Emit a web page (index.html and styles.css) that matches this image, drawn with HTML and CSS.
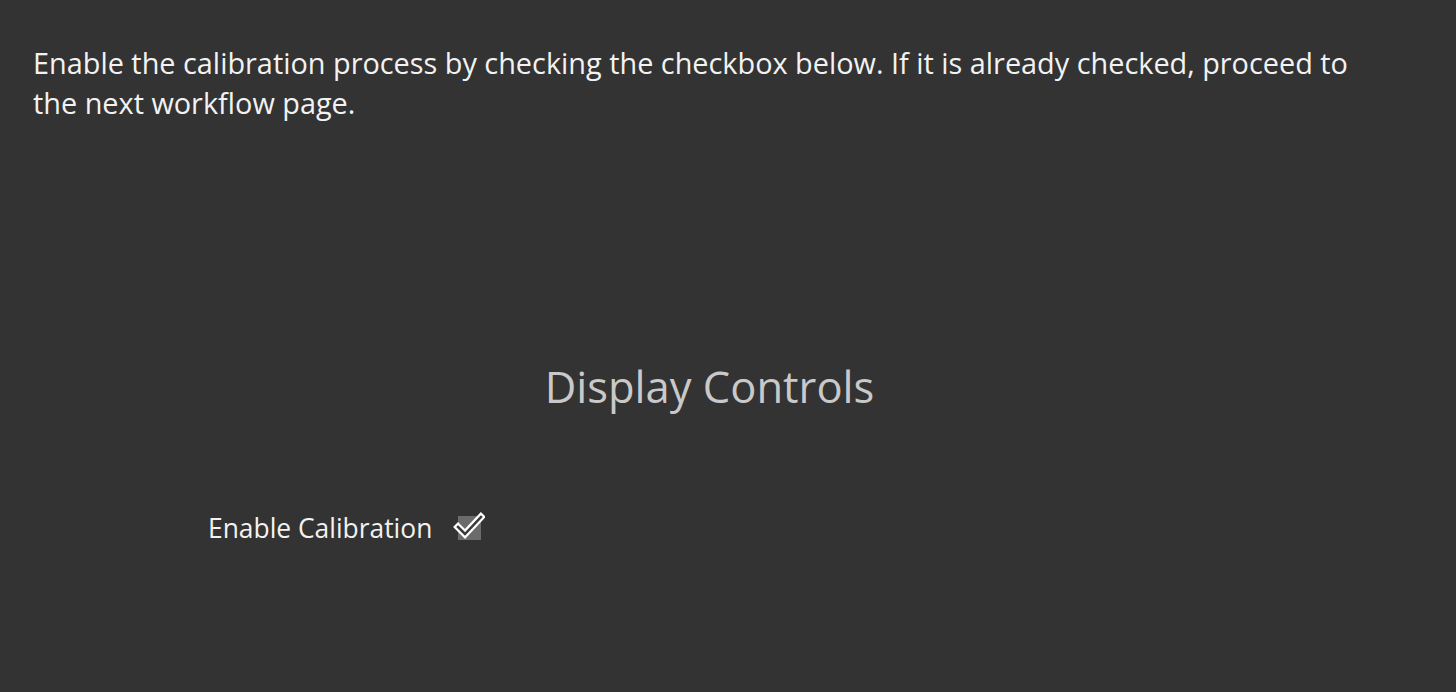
FILE: index.html
```html
<!DOCTYPE html>
<html lang="en">

<head>
    <meta charset="UTF-8">
    <title>Display Controls</title>
    <link rel="stylesheet" href="styles.css">
</head>

<body>
    <div class="page">
        <p class="intro">Enable the calibration process by checking the checkbox below. If it is already checked, proceed to the next workflow page.</p>

        <section class="controls">
            <h1 class="controls-title">Display Controls</h1>

            <label class="option">
                <span class="option-label">Enable Calibration</span>
                <span class="check-box">
                    <svg class="check-mark" width="32" height="32" viewBox="0 0 32 32">
                        <path d="M5 17 L12 24 L28 7" fill="none" stroke="#ffffff" stroke-width="7" stroke-linecap="square" stroke-linejoin="miter"/>
                        <path d="M5 17 L12 24 L28 7" fill="none" stroke="#3a3a3a" stroke-width="2.5" stroke-linecap="square" stroke-linejoin="miter"/>
                    </svg>
                </span>
            </label>
        </section>
    </div>
</body>

</html>
```

FILE: styles.css
```css
* {
    margin: 0;
    padding: 0;
    box-sizing: border-box;
}

html,
body {
    height: 100%;
}

body {
    background-color: #333333;
    font-family: "Open Sans", "Noto Sans", sans-serif;
    color: #f2f2f2;
}

.page {
    padding: 43px 70px 0 33px;
}

.intro {
    font-size: 28.85px;
    line-height: 40px;
    max-width: 1345px;
}

.controls {
    display: flex;
    flex-direction: column;
    padding-top: 234px;
}

.controls-title {
    font-size: 43.5px;
    line-height: 60px;
    font-weight: normal;
    color: #c9c9c9;
    text-align: center;
}

.option {
    display: flex;
    align-items: center;
    gap: 26px;
    margin-top: 93px;
    padding-left: 175px;
}

.option-label {
    font-size: 26.4px;
    line-height: 36px;
}

.check-box {
    position: relative;
    width: 23px;
    height: 24px;
    background-color: #6b6b6b;
}

.check-mark {
    position: absolute;
    left: -5px;
    top: -6px;
}
```
